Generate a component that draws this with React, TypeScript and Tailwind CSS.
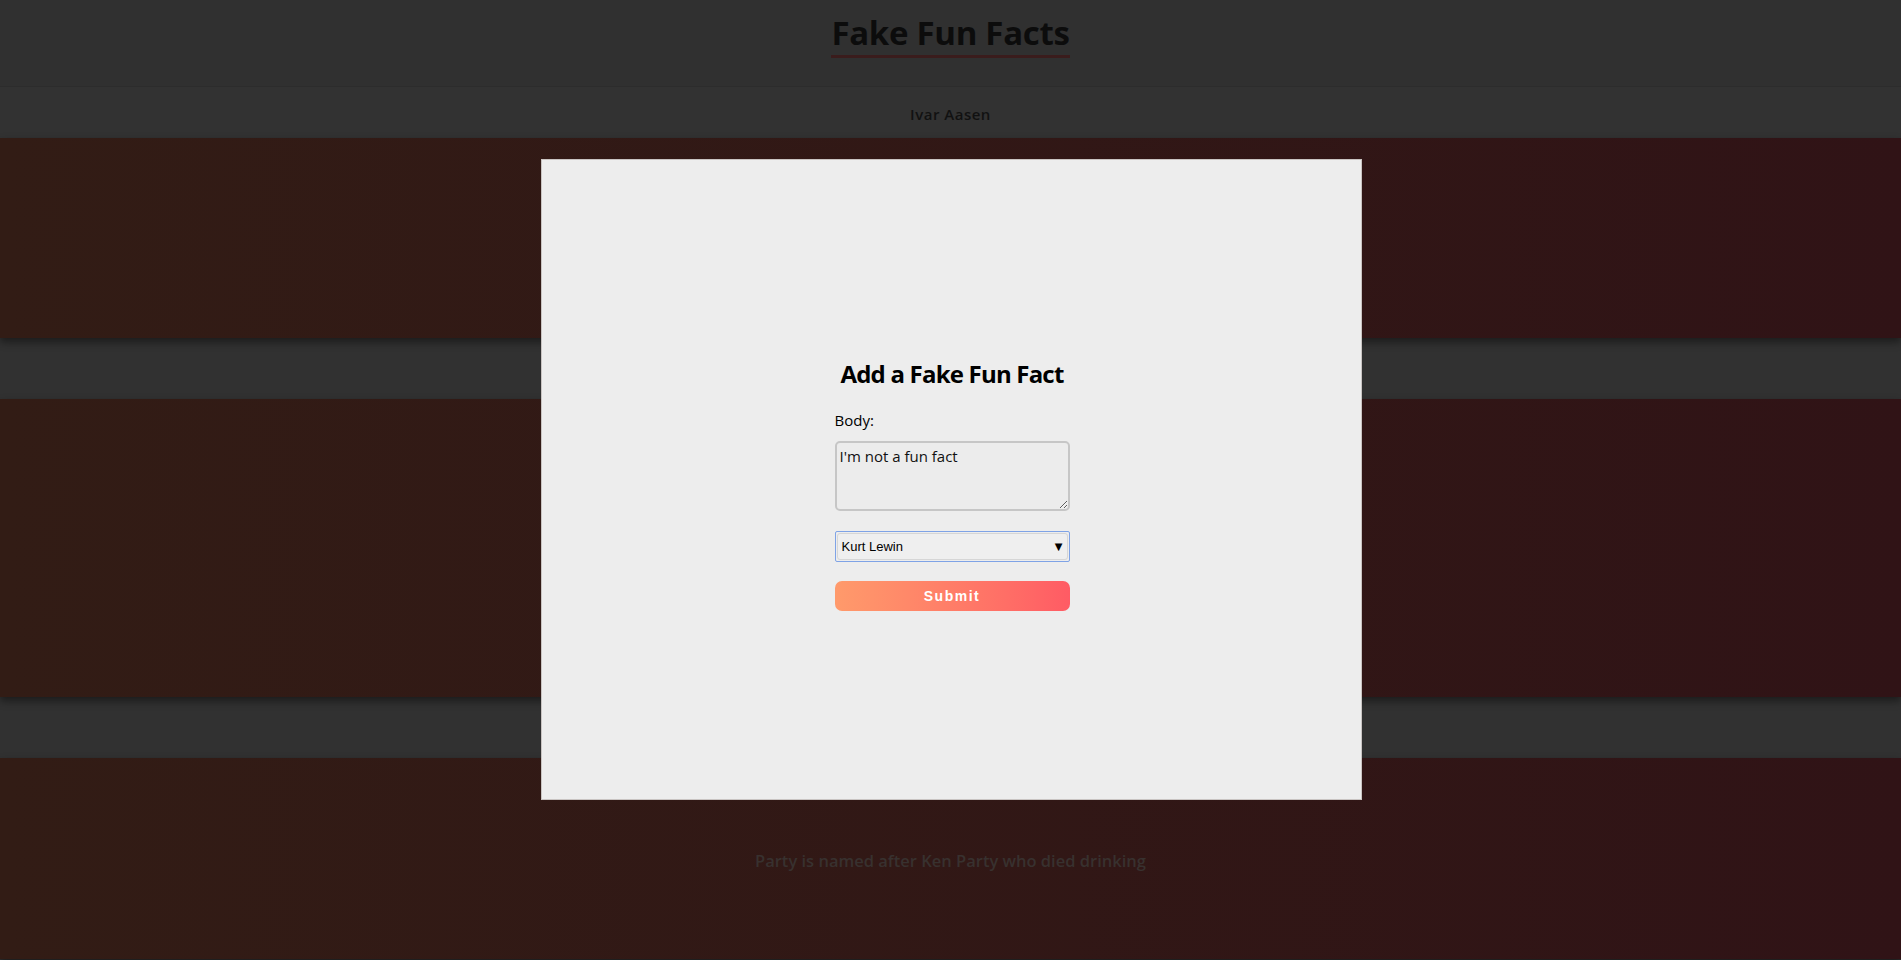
import { useState } from "react";

const FACTS = [
  { id: 1, body: "", height: "h-[200px]" },
  { id: 2, body: "", height: "h-[298px]" },
  { id: 3, body: "Party is named after Ken Party who died drinking", height: "h-[201px]" },
];

function FactCard({ body, height }: { body: string; height: string }) {
  return (
    <div
      className={`${height} relative z-10 flex items-center justify-center bg-gradient-to-r from-[#321c15] to-[#301316] shadow-[0_4px_8px_rgba(0,0,0,0.45)]`}
    >
      <p className="pt-[6px] text-[16.5px] font-semibold text-[#38312f]">{body}</p>
    </div>
  );
}

function Spacer() {
  return <div className="h-[61px] bg-[#313131]" />;
}

export default function App() {
  const [body, setBody] = useState("I'm not a fun fact");
  const [author, setAuthor] = useState("Kurt Lewin");

  return (
    <div className="min-h-screen overflow-hidden bg-[#313131] font-['Open_Sans',sans-serif]">
      {/* Header */}
      <header className="flex h-[87px] items-start justify-center border-b border-[#2c2c2c] bg-[#303030] pt-[11px]">
        <h1 className="border-b-[3px] border-[#3a1c1c] pb-0 text-[33px] leading-[44px] font-bold tracking-[-0.3px] text-[#0c0c0c]">
          Fake Fun Facts
        </h1>
      </header>
      <div className="flex h-[51px] items-center justify-center bg-[#323232] pt-[4px]">
        <span className="text-[15px] font-semibold tracking-[0.5px] text-[#111]">Ivar Aasen</span>
      </div>

      {/* Facts list */}
      <FactCard body={FACTS[0].body} height={FACTS[0].height} />
      <Spacer />
      <FactCard body={FACTS[1].body} height={FACTS[1].height} />
      <Spacer />
      <FactCard body={FACTS[2].body} height={FACTS[2].height} />

      {/* Modal */}
      <div className="fixed inset-0 z-20">
        <div className="absolute top-[159px] left-[541px] flex h-[641px] w-[821px] flex-col items-center border border-[#c9c4c2] bg-[#ededed] pt-[198px] pl-[1px]">
          <form className="flex w-[235px] flex-col" onSubmit={(e) => e.preventDefault()}>
            <h2 className="text-center text-[24px] leading-[32px] font-bold tracking-[-0.8px] whitespace-nowrap text-black">
              Add a Fake Fun Fact
            </h2>
            <label className="mt-[20px] text-[15px] leading-[20px] text-black">Body:</label>
            <textarea
              value={body}
              onChange={(e) => setBody(e.target.value)}
              spellCheck
              className="mt-[11px] h-[70px] w-[235px] resize rounded-[5px] border-2 border-[#c6c6c6] bg-[#ececec] px-[3px] py-[3px] text-[15px] leading-[21px] text-[#111] outline-none"
            />
            <div className="relative mt-[20px] rounded-[2px] border border-[#7fa3e6] p-px">
              <select
                value={author}
                onChange={(e) => setAuthor(e.target.value)}
                className="h-[27px] w-full appearance-none rounded-[3px] border border-[#d6d6d6] bg-[#efefef] px-[4px] font-['Liberation_Sans',Arial,sans-serif] text-[13px] text-black outline-none"
              >
                <option>Kurt Lewin</option>
                <option>Ivar Aasen</option>
              </select>
              <span className="pointer-events-none absolute top-1/2 right-[6px] -translate-y-1/2 font-['DejaVu_Sans',sans-serif] text-[10px] leading-none text-black">
                ▼
              </span>
            </div>
            <button
              type="submit"
              className="mt-[19px] h-[30px] w-full rounded-[7px] bg-gradient-to-r from-[#ff9a6b] to-[#ff5b64] font-['Liberation_Sans',Arial,sans-serif] text-[14px] font-bold tracking-[1.5px] text-white"
            >
              Submit
            </button>
          </form>
        </div>
      </div>
    </div>
  );
}
